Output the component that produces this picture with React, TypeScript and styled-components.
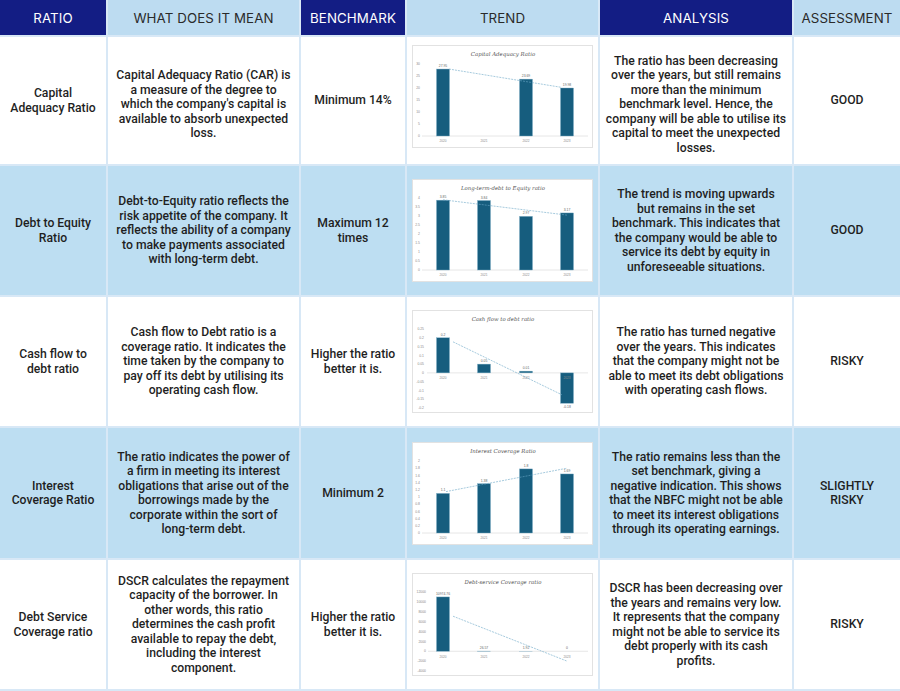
import React from "react";
import styled, { createGlobalStyle } from "styled-components";

const Global = createGlobalStyle`
  html, body { margin: 0; padding: 0; background: #ffffff; }
  body { width: 900px; height: 691px; overflow: hidden; }
`;

const Table = styled.div`
  display: grid;
  grid-template-columns: 106px 191px 104px 191px 192px 106px;
  grid-template-rows: 35px 127px 129px 129px 130px 129px;
  gap: 2px;
  padding-bottom: 2px;
  width: 900px;
  background: #d8e8f6;
`;

const HeadCell = styled.div<{ $dark: boolean }>`
  display: flex;
  align-items: center;
  justify-content: center;
  background: ${(p) => (p.$dark ? "#131d84" : "#bddcf1")};
  color: ${(p) => (p.$dark ? "#ffffff" : "#2a2a2a")};
  font-family: "Inter", "Open Sans", sans-serif;
  font-size: 13.3px;
  font-weight: 400;
  letter-spacing: 0.1px;
  text-transform: uppercase;
`;

const Cell = styled.div<{ $shade: boolean; $pad?: number; $shift?: number }>`
  display: flex;
  align-items: center;
  justify-content: center;
  text-align: center;
  padding: ${(p) => p.$shift ?? 0}px ${(p) => p.$pad ?? 7}px 0;
  background: ${(p) => (p.$shade ? "#bddef2" : "#ffffff")};
  color: #1f1f1f;
  font-family: "Roboto", "Liberation Sans", sans-serif;
  font-size: 12.2px;
  font-weight: 500;
  line-height: 14.5px;
`;

const TrendCell = styled.div<{ $shade: boolean; $shift?: number }>`
  display: flex;
  align-items: center;
  justify-content: center;
  padding-bottom: ${(p) => p.$shift ?? 0}px;
  background: ${(p) => (p.$shade ? "#bddef2" : "#ffffff")};
`;

const ChartBox = styled.div`
  width: 181px;
  height: 103px;
  box-sizing: border-box;
  border: 1px solid #e2e2e2;
  background: #ffffff;
`;

type ChartSpec = {
  title: string;
  ticks: number[];
  max: number;
  min: number;
  bottom: number;
  tickX: number;
  values: number[];
  labels: (string | null)[];
  trend: [number, number, number, number];
  yearY?: number;
  axisStart?: number;
};

const CENTERS = [31, 72, 114, 155];
const YEARS = ["2020", "2021", "2022", "2023"];
const TOP = 19;

function Chart({ spec }: { spec: ChartSpec }) {
  const scale = (spec.bottom - TOP) / (spec.max - spec.min);
  const y = (v: number) => TOP + (spec.max - v) * scale;
  const zero = y(0);
  const yearY = spec.yearY ?? zero + 6;
  return (
    <ChartBox>
      <svg width="179" height="101" viewBox="1 1 179 101">
        <text
          x="91"
          y="11"
          textAnchor="middle"
          fontSize="5.4"
          fontStyle="italic"
          fontFamily="DejaVu Serif, serif"
          fill="#555"
        >
          {spec.title}
        </text>
        {spec.ticks.map((t) => (
          <text
            key={t}
            x={spec.tickX}
            y={y(t) + 1.2}
            textAnchor="end"
            fontSize="3.4"
            fontFamily="Liberation Sans, sans-serif"
            fill="#8a8a8a"
          >
            {t}
          </text>
        ))}
        <line
          x1={spec.axisStart ?? 14}
          x2="176"
          y1={zero}
          y2={zero}
          stroke="#e0e0e0"
          strokeWidth="0.8"
        />
        {spec.values.map((v, i) => {
          const top = Math.min(y(v), zero);
          const h = Math.abs(y(v) - zero);
          return h > 0 ? (
            <rect
              key={i}
              x={CENTERS[i] - 6.5}
              y={top}
              width="13"
              height={h}
              fill="#165d7e"
              stroke="#7fb0c8"
              strokeWidth="0.4"
            />
          ) : null;
        })}
        {YEARS.map((yr, i) => (
          <text
            key={yr}
            x={CENTERS[i]}
            y={yearY}
            textAnchor="middle"
            fontSize="3.2"
            fontFamily="Liberation Sans, sans-serif"
            fill="#8a8a8a"
          >
            {yr}
          </text>
        ))}
        {spec.labels.map((l, i) =>
          l ? (
            <text
              key={i}
              x={CENTERS[i]}
              y={spec.values[i] >= 0 ? y(spec.values[i]) - 2 : y(spec.values[i]) + 5}
              textAnchor="middle"
              fontSize="3.4"
              fontFamily="Liberation Sans, sans-serif"
              fill="#666"
            >
              {l}
            </text>
          ) : null
        )}
        <line
          x1={spec.trend[0]}
          y1={y(spec.trend[1])}
          x2={spec.trend[2]}
          y2={y(spec.trend[3])}
          stroke="#6aa6c6"
          strokeWidth="0.6"
          strokeDasharray="2 1"
        />
      </svg>
    </ChartBox>
  );
}

const range = (a: number, b: number, s: number) => {
  const out: number[] = [];
  const n = Math.round((b - a) / s);
  for (let i = 0; i <= n; i++) out.push(Math.round((a + i * s) * 100) / 100);
  return out;
};

type Row = {
  ratio: string;
  meaning: string;
  bench: string;
  chart: ChartSpec;
  analysis: string;
  assess: string;
  shift?: number;
  analysisPad?: number;
};

const rows: Row[] = [
  {
    ratio: "Capital Adequacy Ratio",
    meaning:
      "Capital Adequacy Ratio (CAR) is a measure of the degree to which the company's capital is available to absorb unexpected loss.",
    bench: "Minimum 14%",
    chart: {
      title: "Capital Adequacy Ratio",
      ticks: range(0, 30, 5),
      max: 30,
      min: 0,
      bottom: 91,
      tickX: 8,
      values: [27.9, 0, 23.7, 20.0],
      labels: ["27.95", null, "23.69", "19.98"],
      trend: [37, 27.9, 149, 20.3],
      axisStart: 10,
    },
    analysis:
      "The ratio has been decreasing over the years, but still remains more than the minimum benchmark level. Hence, the company will be able to utilise its capital to meet the unexpected losses.",
    assess: "GOOD",
    shift: 8,
    analysisPad: 5,
  },
  {
    ratio: "Debt to Equity Ratio",
    meaning:
      "Debt-to-Equity ratio reflects the risk appetite of the company. It reflects the ability of a company to make payments associated with long-term debt.",
    bench: "Maximum 12 times",
    chart: {
      title: "Long-term-debt to Equity ratio",
      ticks: range(0, 4, 0.5),
      max: 4,
      min: 0,
      bottom: 91,
      tickX: 8,
      values: [3.88, 3.86, 2.98, 3.17],
      labels: ["3.85", "3.84", "2.97", "3.17"],
      trend: [31, 3.9, 155, 3.05],
      axisStart: 10,
    },
    analysis:
      "The trend is moving upwards but remains in the set benchmark. This indicates that the company would be able to service its debt by equity in unforeseeable situations.",
    assess: "GOOD",
  },
  {
    ratio: "Cash flow to debt ratio",
    meaning:
      "Cash flow to Debt ratio is a coverage ratio. It indicates the time taken by the company to pay off its debt by utilising its operating cash flow.",
    bench: "Higher the ratio better it is.",
    chart: {
      title: "Cash flow to debt ratio",
      ticks: range(-0.2, 0.25, 0.05).reverse(),
      max: 0.25,
      min: -0.2,
      bottom: 98,
      tickX: 12,
      values: [0.2, 0.05, 0.01, -0.173],
      labels: ["0.2", "0.05", "0.01", "-0.18"],
      trend: [41, 0.177, 150, -0.125],
      axisStart: 15,
    },
    analysis:
      "The ratio has turned negative over the years. This indicates that the company might not be able to meet its debt obligations with operating cash flows.",
    assess: "RISKY",
  },
  {
    ratio: "Interest Coverage Ratio",
    meaning:
      "The ratio indicates the power of a firm in meeting its interest obligations that arise out of the borrowings made by the corporate within the sort of long-term debt.",
    bench: "Minimum 2",
    chart: {
      title: "Interest Coverage Ratio",
      ticks: range(0, 2, 0.2),
      max: 2,
      min: 0,
      bottom: 91,
      tickX: 8,
      values: [1.1, 1.37, 1.78, 1.64],
      labels: ["1.1", "1.38", "1.8", "1.69"],
      trend: [34, 1.15, 155, 1.8],
      axisStart: 10,
    },
    analysis:
      "The ratio remains less than the set benchmark, giving a negative indication. This shows that the NBFC might not be able to meet its interest obligations through its operating earnings.",
    assess: "SLIGHTLY RISKY",
  },
  {
    ratio: "Debt Service Coverage ratio",
    meaning:
      "DSCR calculates the repayment capacity of the borrower. In other words, this ratio determines the cash profit available to repay the debt, including the interest component.",
    bench: "Higher the ratio better it is.",
    chart: {
      title: "Debt-service Coverage ratio",
      ticks: range(-4000, 12000, 2000).reverse(),
      max: 12000,
      min: -4000,
      bottom: 98,
      tickX: 14,
      values: [11000, 26.57, 1.92, 0],
      labels: ["10974.76", "26.57", "1.92", "0"],
      trend: [41, 7100, 155, -2000],
      yearY: 85,
      axisStart: 16,
    },
    analysis:
      "DSCR has been decreasing over the years and remains very low. It represents that the company might not be able to service its debt properly with its cash profits.",
    assess: "RISKY",
  },
];

const headers: { label: string; dark: boolean }[] = [
  { label: "Ratio", dark: true },
  { label: "What does it mean", dark: false },
  { label: "Benchmark", dark: true },
  { label: "Trend", dark: false },
  { label: "Analysis", dark: true },
  { label: "Assessment", dark: false },
];

export default function App() {
  return (
    <>
      <Global />
      <Table>
        {headers.map((h) => (
          <HeadCell key={h.label} $dark={h.dark}>
            {h.label}
          </HeadCell>
        ))}
        {rows.map((r, i) => {
          const shade = i % 2 === 1;
          return (
            <React.Fragment key={r.ratio}>
              <Cell $shade={shade} $pad={10}>{r.ratio}</Cell>
              <Cell $shade={shade} $shift={r.shift}>{r.meaning}</Cell>
              <Cell $shade={shade}>{r.bench}</Cell>
              <TrendCell $shade={shade} $shift={r.shift}>
                <Chart spec={r.chart} />
              </TrendCell>
              <Cell $shade={shade} $pad={r.analysisPad ?? 7} $shift={r.shift}>
                {r.analysis}
              </Cell>
              <Cell $shade={shade} $pad={12}>{r.assess}</Cell>
            </React.Fragment>
          );
        })}
      </Table>
    </>
  );
}
